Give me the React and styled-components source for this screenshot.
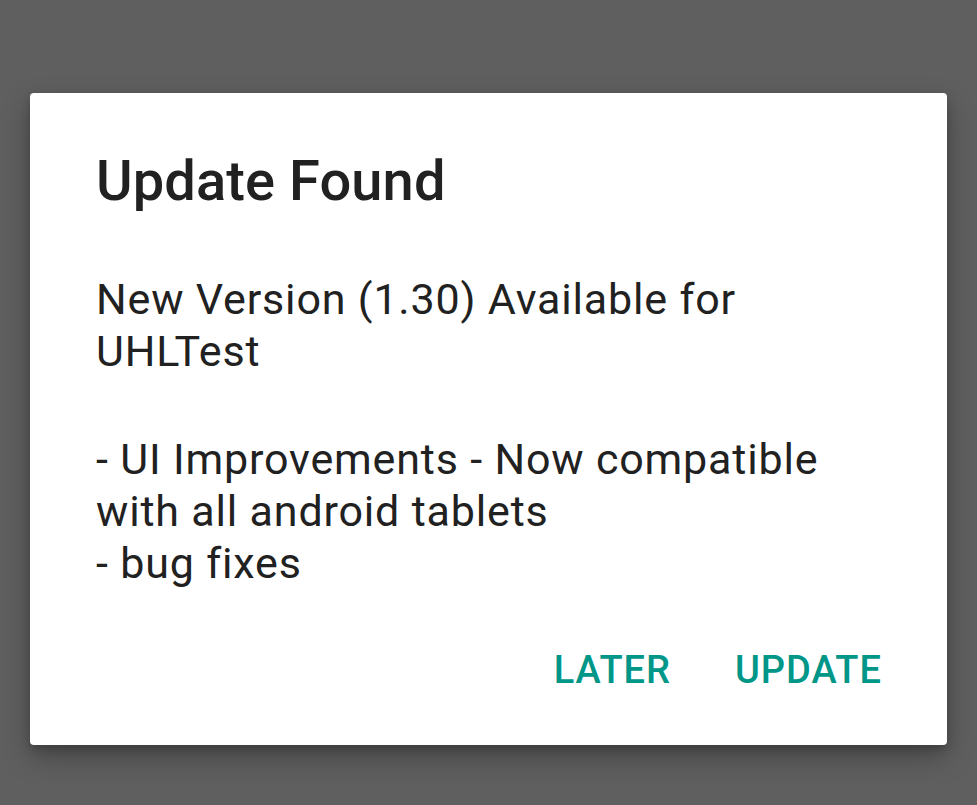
import React from "react";
import styled, { createGlobalStyle } from "styled-components";

const GlobalStyle = createGlobalStyle`
  html, body {
    margin: 0;
    padding: 0;
    background: #5f5f5f;
  }
  body {
    font-family: Roboto, "Noto Sans", "Liberation Sans", sans-serif;
  }
`;

const Backdrop = styled.div`
  min-height: 805px;
  box-sizing: border-box;
  padding: 93px 30px 0 30px;
  background: #5f5f5f;
`;

const Dialog = styled.div`
  width: 917px;
  height: 652px;
  box-sizing: border-box;
  background: #ffffff;
  border-radius: 4px;
  box-shadow: 0 12px 28px rgba(0, 0, 0, 0.28), 0 4px 10px rgba(0, 0, 0, 0.18);
  padding: 58px 65px 53px 66px;
  display: flex;
  flex-direction: column;
`;

const Title = styled.h1`
  margin: 0;
  font-size: 56px;
  line-height: 60px;
  letter-spacing: 0.1px;
  font-weight: 500;
  color: #212121;
`;

const Message = styled.p`
  margin: ${(p) => (p.$first ? "62px" : "56px")} 0 0 0;
  font-size: 43px;
  line-height: 52px;
  letter-spacing: 0.83px;
  font-weight: 400;
  color: #212121;
  white-space: nowrap;
`;

const Actions = styled.div`
  margin-top: auto;
  display: flex;
  justify-content: flex-end;
  gap: 64px;
`;

const ActionButton = styled.button`
  border: none;
  background: none;
  padding: 0;
  font-family: inherit;
  font-size: 38px;
  line-height: 44px;
  letter-spacing: 1px;
  font-weight: 500;
  color: #009688;
  text-transform: uppercase;
  cursor: pointer;
`;

export default function App() {
  return (
    <>
      <GlobalStyle />
      <Backdrop>
        <Dialog>
          <Title>Update Found</Title>
          <Message $first>
            New Version (1.30) Available for
            <br />
            UHLTest
          </Message>
          <Message>
            - UI Improvements - Now compatible
            <br />
            with all android tablets
            <br />
            - bug fixes
          </Message>
          <Actions>
            <ActionButton>Later</ActionButton>
            <ActionButton>Update</ActionButton>
          </Actions>
        </Dialog>
      </Backdrop>
    </>
  );
}
